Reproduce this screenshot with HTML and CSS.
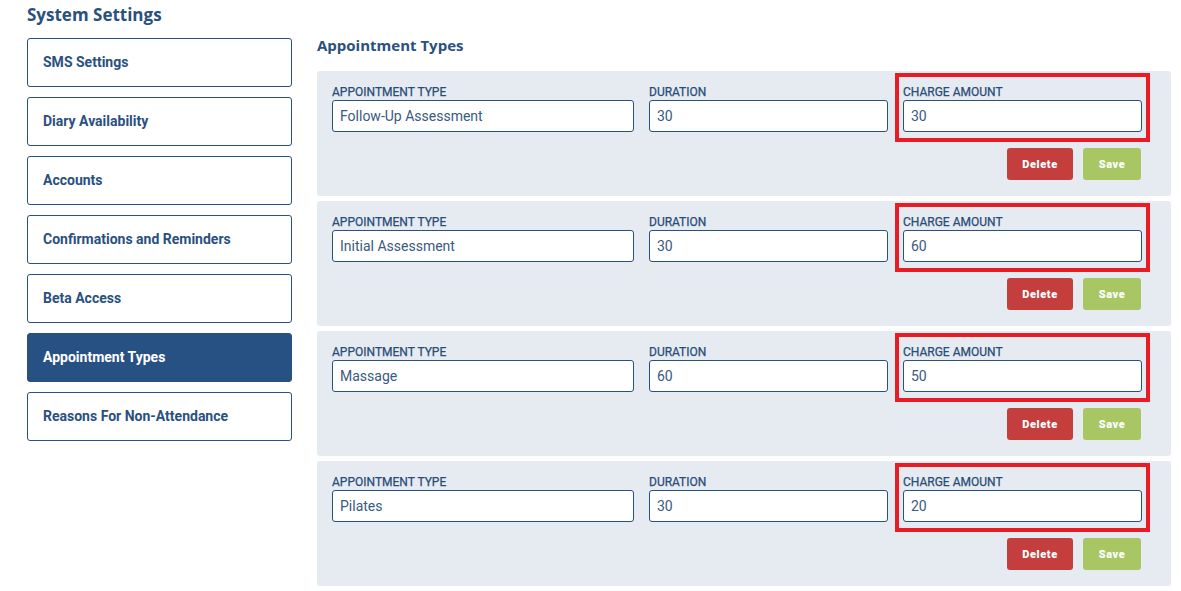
FILE: index.html
```html
<!DOCTYPE html>
<html lang="en">
<head>
<meta charset="utf-8">
<title>System Settings</title>
<link rel="stylesheet" href="styles.css">
</head>
<body>
<div class="page">
  <h1 class="page-title">System Settings</h1>
  <div class="layout">
    <nav class="sidebar">
      <a class="nav-item">SMS Settings</a>
      <a class="nav-item">Diary Availability</a>
      <a class="nav-item">Accounts</a>
      <a class="nav-item">Confirmations and Reminders</a>
      <a class="nav-item">Beta Access</a>
      <a class="nav-item active">Appointment Types</a>
      <a class="nav-item">Reasons For Non-Attendance</a>
    </nav>
    <main class="main">
      <h2 class="section-title">Appointment Types</h2>
      <div class="cards">
        <div class="card">
          <div class="fields">
            <div class="field"><label>Appointment Type</label><input type="text" value="Follow-Up Assessment"></div>
            <div class="field"><label>Duration</label><input type="text" value="30"></div>
            <div class="field highlighted"><label>Charge Amount</label><input type="text" value="30"><span class="hl-box"></span></div>
          </div>
          <div class="actions"><button class="btn btn-delete">Delete</button><button class="btn btn-save">Save</button></div>
        </div>
        <div class="card">
          <div class="fields">
            <div class="field"><label>Appointment Type</label><input type="text" value="Initial Assessment"></div>
            <div class="field"><label>Duration</label><input type="text" value="30"></div>
            <div class="field highlighted"><label>Charge Amount</label><input type="text" value="60"><span class="hl-box"></span></div>
          </div>
          <div class="actions"><button class="btn btn-delete">Delete</button><button class="btn btn-save">Save</button></div>
        </div>
        <div class="card">
          <div class="fields">
            <div class="field"><label>Appointment Type</label><input type="text" value="Massage"></div>
            <div class="field"><label>Duration</label><input type="text" value="60"></div>
            <div class="field highlighted"><label>Charge Amount</label><input type="text" value="50"><span class="hl-box"></span></div>
          </div>
          <div class="actions"><button class="btn btn-delete">Delete</button><button class="btn btn-save">Save</button></div>
        </div>
        <div class="card">
          <div class="fields">
            <div class="field"><label>Appointment Type</label><input type="text" value="Pilates"></div>
            <div class="field"><label>Duration</label><input type="text" value="30"></div>
            <div class="field highlighted"><label>Charge Amount</label><input type="text" value="20"><span class="hl-box"></span></div>
          </div>
          <div class="actions"><button class="btn btn-delete">Delete</button><button class="btn btn-save">Save</button></div>
        </div>
      </div>
    </main>
  </div>
</div>
</body>
</html>
```

FILE: styles.css
```css
* { box-sizing: border-box; }
html, body { margin: 0; padding: 0; background: #ffffff; }
body { font-family: Roboto, "Liberation Sans", Arial, sans-serif; color: #2a5080; }

.page { padding: 3px 10px 0 27px; }

.page-title {
  margin: 0 0 11px 0;
  font-family: "Open Sans", "Liberation Sans", sans-serif;
  font-weight: 700;
  font-size: 17px;
  line-height: 24px;
  color: #2a5080;
}

.layout { display: flex; gap: 25px; align-items: flex-start; }

.sidebar { width: 265px; display: flex; flex-direction: column; gap: 10px; flex-shrink: 0; }

.nav-item {
  display: flex;
  align-items: center;
  height: 49px;
  padding-left: 15px;
  padding-bottom: 1px;
  border: 1px solid #2a5080;
  border-radius: 3px;
  font-size: 14px;
  font-weight: 700;
  color: #2a5080;
  background: #ffffff;
}
.nav-item.active { background: #285183; color: #ffffff; }

.main { width: 854px; }

.section-title {
  margin: -3px 0 16px 0;
  font-family: "Open Sans", "Liberation Sans", sans-serif;
  font-weight: 700;
  font-size: 15px;
  line-height: 20px;
  color: #2a5080;
}

.cards { display: flex; flex-direction: column; gap: 5px; }

.card {
  background: #e6ebf2;
  border-radius: 3px;
  padding: 14px 30px 16px 15px;
}

.fields {
  display: grid;
  grid-template-columns: 302px 239px 239px;
  column-gap: 15px;
}

.field { position: relative; display: flex; flex-direction: column; }

.field label {
  font-size: 12px;
  font-weight: 400;
  line-height: 14px;
  text-transform: uppercase;
  color: #284c76;
  -webkit-text-stroke: 0.25px #284c76;
  margin-bottom: 1px;
}

.field input {
  height: 32px;
  border: 1px solid #2a5080;
  border-radius: 3px;
  padding: 0 7px;
  font-family: Roboto, "Liberation Sans", Arial, sans-serif;
  font-size: 14px;
  color: #3a5a80;
  background: #ffffff;
}

.hl-box {
  position: absolute;
  left: -8px;
  right: -8px;
  top: -12px;
  bottom: -10px;
  border: 4px solid #e81c24;
  pointer-events: none;
}

.actions {
  display: flex;
  justify-content: flex-end;
  gap: 10px;
  margin-top: 16px;
}

.btn {
  height: 32px;
  border: 0;
  border-radius: 3px;
  font-family: Roboto, "Liberation Sans", Arial, sans-serif;
  font-size: 11px;
  font-weight: 900;
  letter-spacing: 0.6px;
  color: #ffffff;
  padding: 0;
}
.btn-delete { width: 66px; background: #c53e3e; }
.btn-save { width: 58px; background: #a8c663; }
```
